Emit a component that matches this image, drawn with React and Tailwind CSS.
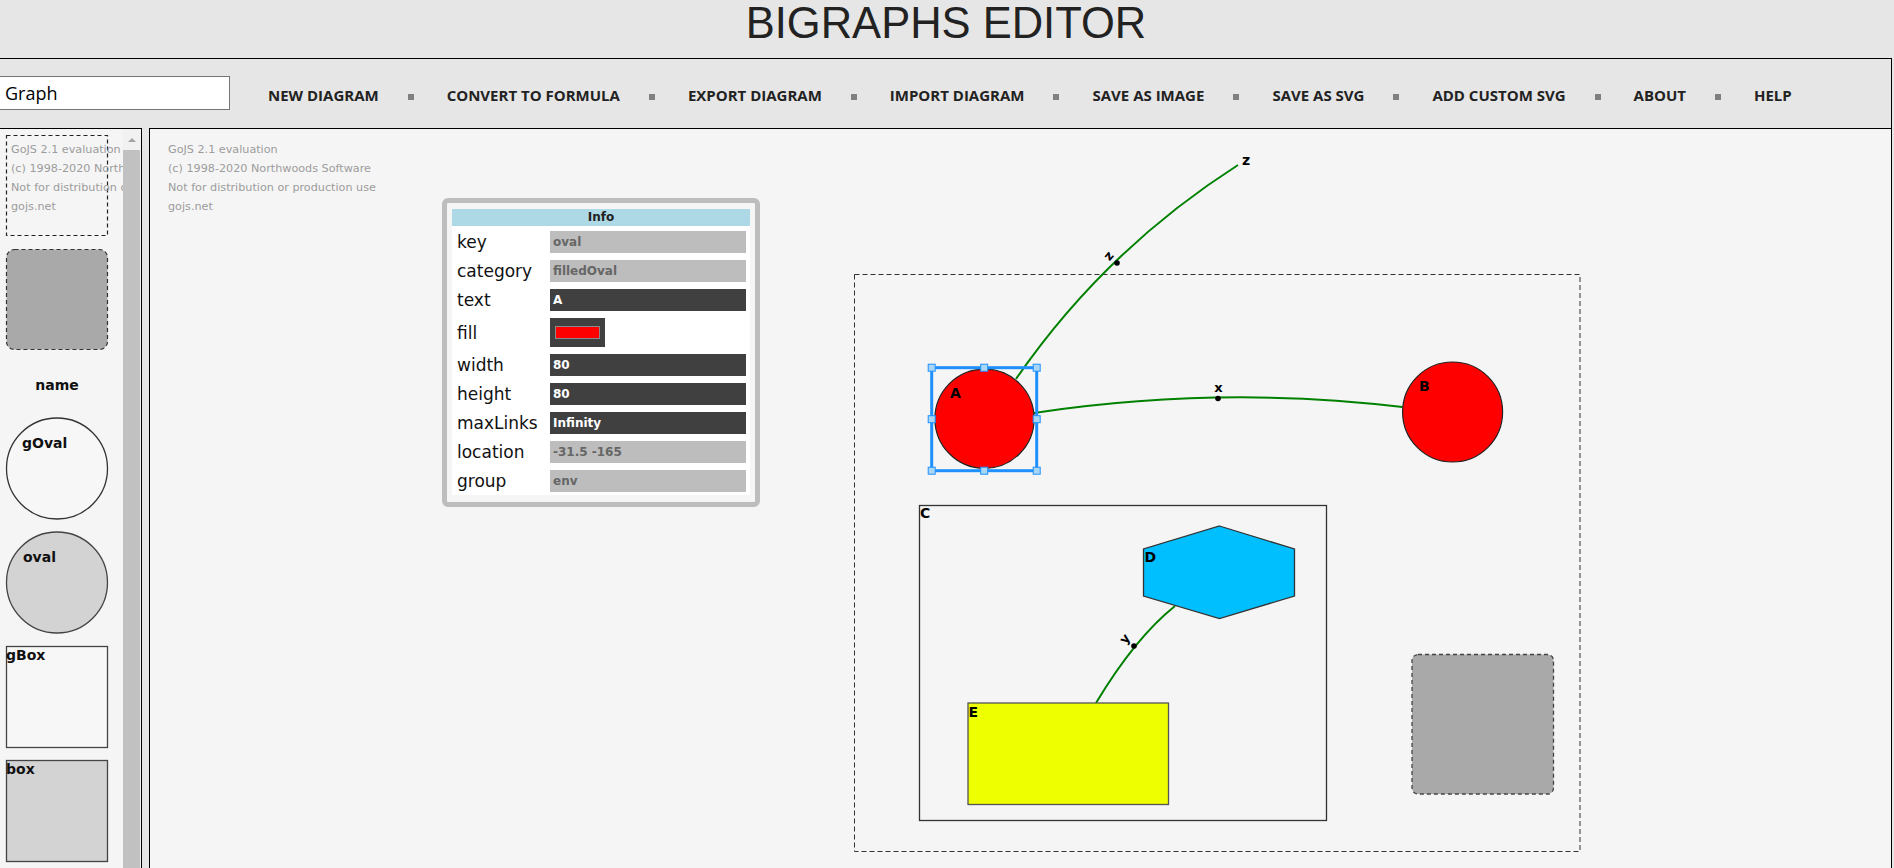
const NAV = [
  'NEW DIAGRAM',
  'CONVERT TO FORMULA',
  'EXPORT DIAGRAM',
  'IMPORT DIAGRAM',
  'SAVE AS IMAGE',
  'SAVE AS SVG',
  'ADD CUSTOM SVG',
  'ABOUT',
  'HELP',
];

const ROWS = [
  { key: 'key', value: 'oval', dark: false },
  { key: 'category', value: 'filledOval', dark: false },
  { key: 'text', value: 'A', dark: true },
  { key: 'fill', color: '#ff0000' },
  { key: 'width', value: '80', dark: true },
  { key: 'height', value: '80', dark: true },
  { key: 'maxLinks', value: 'Infinity', dark: true },
  { key: 'location', value: '-31.5 -165', dark: false },
  { key: 'group', value: 'env', dark: false },
];

const WATERMARK = [
  'GoJS 2.1 evaluation',
  '(c) 1998-2020 Northwoods Software',
  'Not for distribution or production use',
  'gojs.net',
];

const SANS = 'DejaVu Sans, sans-serif';

function Watermark({ x }) {
  return WATERMARK.map((line, i) => (
    <text key={line} x={x} y={152.5 + i * 19} fontFamily={SANS} fontSize="11.2" fill="#9c9c9c">
      {line}
    </text>
  ));
}

function Palette() {
  return (
    <aside className="w-[142px] h-[741px] border-t border-r border-black bg-[#f5f5f5] flex">
      <svg width="123" height="740" viewBox="0 129 123 740" className="block shrink-0">
        <rect x="6.5" y="135.5" width="101" height="100" fill="none" stroke="#222" strokeWidth="1.2" strokeDasharray="4 3" />
        <Watermark x={11} />
        <rect x="6.5" y="249.5" width="101" height="100" rx="8" fill="#a9a9a9" stroke="#333" strokeWidth="1.2" strokeDasharray="4 3" />
        <text x="57" y="389.5" textAnchor="middle" fontFamily={SANS} fontWeight="bold" fontSize="14" fill="#111">name</text>

        <circle cx="57" cy="468.5" r="50.5" fill="#f7f7f7" stroke="#333" strokeWidth="1.3" />
        <text x="22" y="447.5" fontFamily={SANS} fontWeight="bold" fontSize="14" fill="#111">gOval</text>

        <circle cx="57" cy="582.5" r="50.5" fill="#d3d3d3" stroke="#444" strokeWidth="1.3" />
        <text x="23" y="561.5" fontFamily={SANS} fontWeight="bold" fontSize="14" fill="#111">oval</text>

        <rect x="6.5" y="646.5" width="101" height="101" fill="#f7f7f7" stroke="#444" strokeWidth="1.3" />
        <text x="6" y="659.5" fontFamily={SANS} fontWeight="bold" fontSize="14" fill="#111">gBox</text>

        <rect x="6.5" y="760.5" width="101" height="101" fill="#d3d3d3" stroke="#444" strokeWidth="1.3" />
        <text x="6" y="773.5" fontFamily={SANS} fontWeight="bold" fontSize="14" fill="#111">box</text>
      </svg>
      <div className="w-[17px] bg-[#f1f1f1] flex flex-col items-center">
        <div className="h-[21px] w-full flex items-center justify-center">
          <span className="block w-0 h-0 border-l-[4px] border-r-[4px] border-b-[4px] border-l-transparent border-r-transparent border-b-[#a3a3a3]" />
        </div>
        <div className="w-full flex-1 bg-[#c1c1c1]" />
      </div>
    </aside>
  );
}

function Handle({ x, y }) {
  return <rect x={x - 3.5} y={y - 3.5} width="7" height="7" fill="#a9d6f5" stroke="#1e90ff" strokeWidth="1" />;
}

function Diagram() {
  const label = { fontFamily: SANS, fontWeight: 'bold', fontSize: 14, fill: '#000' };
  return (
    <svg width="1741" height="739" viewBox="150 129 1741 739" className="block">
      <Watermark x={168} />

      {/* env group */}
      <rect x="854.5" y="274.5" width="725.5" height="577" fill="none" stroke="#333" strokeWidth="1" strokeDasharray="5 3" />

      {/* C group */}
      <rect x="919.5" y="505.5" width="407" height="315" fill="none" stroke="#333" strokeWidth="1.3" />
      <text x="920" y="518" {...label}>C</text>

      {/* links */}
      <path d="M 1016 379 Q 1105 250 1238 165" fill="none" stroke="#008000" strokeWidth="2" />
      <path d="M 1034 413 Q 1220 385 1402.5 407" fill="none" stroke="#008000" strokeWidth="2" />
      <path d="M 1175 606 Q 1135 638 1096 703" fill="none" stroke="#008000" strokeWidth="2" />

      <circle cx="1117" cy="263" r="2.8" fill="#000" />
      <circle cx="1218" cy="398.5" r="2.8" fill="#000" />
      <circle cx="1134" cy="646" r="2.8" fill="#000" />

      <text x="1242" y="164.5" {...label}>z</text>
      <text x="1218.5" y="391.5" textAnchor="middle" {...label} fontSize="13">x</text>
      <text x="1109" y="260" textAnchor="middle" transform="rotate(-50 1109 256)" {...label} fontSize="13">z</text>
      <text x="1125" y="643" textAnchor="middle" transform="rotate(-51 1125 639)" {...label} fontSize="13">y</text>

      {/* nodes */}
      <circle cx="984.5" cy="418.7" r="49.6" fill="#ff0000" stroke="#222" strokeWidth="1.2" />
      <text x="950" y="398.3" {...label}>A</text>

      <circle cx="1452.6" cy="412" r="50" fill="#ff0000" stroke="#222" strokeWidth="1.2" />
      <text x="1419" y="391" {...label}>B</text>

      <polygon points="1219.5,526 1294.5,549 1294.5,596 1219.5,618.5 1143.5,596 1143.5,549" fill="#00bfff" stroke="#333" strokeWidth="1.3" />
      <text x="1144.5" y="562" {...label}>D</text>

      <rect x="968" y="703" width="200.5" height="101.5" fill="#eeff00" stroke="#555" strokeWidth="1.3" />
      <text x="968.5" y="717" {...label}>E</text>

      <rect x="1412" y="654.5" width="141.5" height="139.5" rx="6" fill="#a9a9a9" stroke="#444" strokeWidth="1.3" strokeDasharray="4 3" />

      {/* selection adornment on A */}
      <rect x="931.7" y="367.7" width="105" height="103" fill="none" stroke="#1e90ff" strokeWidth="3" />
      {[
        [931.7, 367.7], [984.2, 367.7], [1036.7, 367.7],
        [931.7, 419.2], [1036.7, 419.2],
        [931.7, 470.7], [984.2, 470.7], [1036.7, 470.7],
      ].map(([x, y]) => (
        <Handle key={`${x}-${y}`} x={x} y={y} />
      ))}
    </svg>
  );
}

function InfoPanel() {
  return (
    <div className="absolute left-[292px] top-[69px] w-[318px] h-[309px] border-[5px] border-[#bdbdbd] rounded-[6px] bg-[#f5f5f5] px-[5px] pt-[6px] font-['DejaVu_Sans',sans-serif]">
      <div className="bg-white">
        <div className="h-[17px] bg-[#add8e6] text-center text-[12px] leading-[17px] font-bold text-[#222]">Info</div>
        <div className="flex flex-col gap-[7px] pt-[5px] pb-[3px]">
          {ROWS.map((row) => (
            <div key={row.key} className="flex items-center">
              <div className="w-[98px] pl-[5px] text-[17px] leading-[22px] text-[#111]">{row.key}</div>
              {row.color ? (
                <div className="w-[55px] h-[29px] bg-[#404040] flex items-center justify-center">
                  <div className="w-[45px] h-[13px] border border-[#8a8a8a] bg-[#ff0000]" />
                </div>
              ) : (
                <div
                  className={`w-[196px] h-[22px] pl-[3px] text-[12px] leading-[22px] font-bold ${
                    row.dark ? 'bg-[#404040] text-white' : 'bg-[#bdbdbd] text-[#666]'
                  }`}
                >
                  {row.value}
                </div>
              )}
            </div>
          ))}
        </div>
      </div>
    </div>
  );
}

export default function App() {
  return (
    <div className="w-[1894px] h-[868px] overflow-hidden bg-[#e6e6e6]">
      {/* Header */}
      <header className="h-[59px] w-[1892px] border-b border-black">
        <h1 className="pt-[1px] text-center text-[43.5px] leading-[44px] text-[#222] font-['Liberation_Sans',Arial,sans-serif]">
          BIGRAPHS EDITOR
        </h1>
      </header>

      {/* Toolbar */}
      <nav className="h-[69px] w-[1892px] border-r border-black flex items-start">
        <input
          defaultValue="Graph"
          className="-ml-px mt-[17px] w-[231px] h-[34px] border border-[#767676] bg-white pl-[5px] text-[18px] text-black outline-none font-['Open_Sans',sans-serif]"
        />
        <ul className="ml-[38px] mt-[26px] flex items-center font-['Open_Sans',sans-serif] font-bold text-[15px] leading-[20px] text-[#222]">
          {NAV.map((item, i) => (
            <li key={item} className="flex items-center">
              <span>{item}</span>
              {i < NAV.length - 1 && <span className="ml-[29px] mr-[33px] mt-[3px] w-[6px] h-[6px] bg-[#808080]" />}
            </li>
          ))}
        </ul>
      </nav>

      {/* Workspace */}
      <div className="flex">
        <Palette />
        <main className="relative ml-[7px] w-[1743px] h-[741px] border border-black bg-[#f5f5f5]">
          <Diagram />
          <InfoPanel />
        </main>
      </div>
    </div>
  );
}
